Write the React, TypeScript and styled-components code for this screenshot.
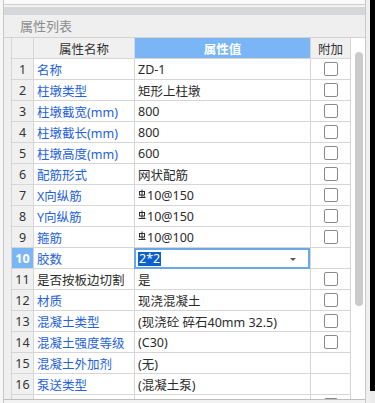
import React from "react";
import styled, { createGlobalStyle } from "styled-components";

const Global = createGlobalStyle`
  html, body { margin: 0; padding: 0; background: #f4f4f4; }
  body { font-family: "Noto Sans", "Noto Sans CJK SC", sans-serif; }
  * { box-sizing: border-box; }
`;

const Page = styled.div`
  display: flex;
  width: 375px;
  height: 403px;
  overflow: hidden;
  background: #f4f4f4;
`;

const LeftGap = styled.div`
  flex: 0 0 3px;
  background: #f6f6f6;
`;

const Panel = styled.div`
  flex: 0 0 363px;
  display: flex;
  flex-direction: column;
  border-left: 1px solid #c9c9c9;
  border-right: 1px solid #c9c9c9;
  background: #efefef;
`;

const TopStrip = styled.div`
  height: 5px;
  background: #fafafa;
  border-bottom: 1px solid #cfcfcf;
`;

const Spacer = styled.div`
  height: 2px;
  background: #f3f3f3;
`;

const Band = styled.div`
  height: 8px;
  background: #d6d7db;
`;

const TitleBar = styled.div`
  height: 23px;
  display: flex;
  align-items: center;
  padding-left: 16px;
  padding-bottom: 1px;
  background: #efefef;
  border-bottom: 1px solid #d2d2d2;
  color: #8c8c8c;
  font-family: "Noto Sans CJK SC", sans-serif;
  font-size: 13px;
`;

const Body = styled.div`
  height: 362px;
  display: flex;
  padding-left: 7px;
  background: #efefef;
  border-bottom: 1px solid #bdbdbd;
  overflow: hidden;
`;

const Table = styled.div`
  flex: 0 0 340px;
  border-left: 1px solid #d4d4d4;
  background: #fff;
  display: flex;
  flex-direction: column;
`;

const Row = styled.div`
  display: grid;
  grid-template-columns: 22px 101px 176px 40px;
  height: 21px;
  flex: 0 0 21px;
`;

const Cell = styled.div<{ $bg?: string; $align?: string; $color?: string; $bold?: boolean }>`
  position: relative;
  display: flex;
  align-items: center;
  justify-content: ${(p) => p.$align || "flex-start"};
  padding-left: ${(p) => (p.$align === "center" ? "0" : "3px")};
  background: ${(p) => p.$bg || "#fff"};
  color: ${(p) => p.$color || "#2b2b2b"};
  font-weight: ${(p) => (p.$bold ? 700 : 400)};
  font-size: 12.5px;
  border-right: 1px solid #d6d6d6;
  border-bottom: 1px solid #d6d6d6;
  white-space: nowrap;
  overflow: visible;
`;

const HeadCell = styled(Cell)`
  justify-content: center;
  padding-left: 0;
  font-family: "Noto Sans CJK SC", sans-serif;
  font-size: 12.5px;
`;

const Check = styled.span`
  width: 14px;
  height: 14px;
  border: 1px solid #8a8a8a;
  border-radius: 2px;
  background: #fff;
  margin-left: 1px;
`;

const Editor = styled.div`
  position: absolute;
  left: -1px;
  top: 0;
  right: 0;
  bottom: -1px;
  border: 2px solid #69a7e6;
  background: #fff;
  display: flex;
  align-items: center;
  padding-left: 2px;
  z-index: 2;
`;

const Selected = styled.span`
  background: #0d5fcc;
  color: #fff;
  padding: 0 1px;
  line-height: 14px;
`;

const Caret = styled.span`
  position: absolute;
  right: 12px;
  top: 8px;
  width: 0;
  height: 0;
  border-left: 3px solid transparent;
  border-right: 3px solid transparent;
  border-top: 3px solid #555;
`;

const Track = styled.div`
  flex: 0 0 14px;
  background: #fff;
  padding-top: 14px;
  display: flex;
  justify-content: center;
`;

const Thumb = styled.div`
  width: 8px;
  height: 254px;
  border-radius: 4px;
  background: #cbcbcb;
  margin-left: 2px;
`;

const BottomStrip = styled.div`
  flex: 1;
  background: #f2f2f2;
`;

const RightGutter = styled.div`
  flex: 0 0 4px;
  background: #efefef;
`;

const BlackEdge = styled.div`
  flex: 0 0 5px;
  display: flex;
  flex-direction: column;
`;

const BlackPart = styled.div`
  height: 391px;
  background: #000;
`;

const GreyPart = styled.div`
  flex: 1;
  background: #ececec;
`;

const Rebar = () => (
  <svg width="8" height="10" viewBox="0 0 8 10" style={{ marginRight: 1, marginTop: -3 }}>
    <g stroke="#2b2b2b" strokeWidth="1" fill="none">
      <path d="M4 0.5V8.5" />
      <rect x="1.5" y="2.5" width="5" height="3.5" />
      <path d="M0.5 8.5H7.5" />
      <path d="M5.5 7L6.8 8" />
    </g>
  </svg>
);

type R = { name: string; value: React.ReactNode; cb: boolean; black?: boolean; partial?: boolean };

const rows: R[] = [
  { name: "名称", value: "ZD-1", cb: true },
  { name: "柱墩类型", value: "矩形上柱墩", cb: true },
  { name: "柱墩截宽(mm)", value: "800", cb: true },
  { name: "柱墩截长(mm)", value: "800", cb: true },
  { name: "柱墩高度(mm)", value: "600", cb: true },
  { name: "配筋形式", value: "网状配筋", cb: true },
  { name: "X向纵筋", value: <><Rebar />10@150</>, cb: true },
  { name: "Y向纵筋", value: <><Rebar />10@150</>, cb: true },
  { name: "箍筋", value: <><Rebar />10@100</>, cb: true },
  { name: "胶数", value: "2*2", cb: false },
  { name: "是否按板边切割", value: "是", cb: true, black: true },
  { name: "材质", value: "现浇混凝土", cb: true },
  { name: "混凝土类型", value: "(现浇砼 碎石40mm 32.5)", cb: true },
  { name: "混凝土强度等级", value: "(C30)", cb: true },
  { name: "混凝土外加剂", value: "(无)", cb: false },
  { name: "泵送类型", value: "(混凝土泵)", cb: false },
  { name: "", value: "", cb: true, partial: true },
];

export default function App() {
  return (
    <>
      <Global />
      <Page>
        <LeftGap />
        <Panel>
          <TopStrip />
          <Spacer />
          <Band />
          <TitleBar>属性列表</TitleBar>
          <Body>
            <Table>
              <Row>
                <HeadCell $bg="#f0f0f0" />
                <HeadCell $bg="#f0f0f0" $color="#333">属性名称</HeadCell>
                <HeadCell $bg="#7ab6f6" $color="#fff" $bold>属性值</HeadCell>
                <HeadCell $bg="#f0f0f0" $color="#333">附加</HeadCell>
              </Row>
              {rows.map((r, i) => {
                const active = i === 9;
                return (
                  <Row key={i}>
                    <Cell
                      $bg={active ? "#7ab6f6" : "#f0f0f0"}
                      $align="center"
                      $color={active ? "#fff" : "#333"}
                      $bold={active}
                    >
                      {r.partial ? "" : i + 1}
                    </Cell>
                    <Cell $color={r.black ? "#2b2b2b" : "#2461dc"}>{r.name}</Cell>
                    <Cell>
                      {active ? (
                        <Editor>
                          <Selected>{r.value}</Selected>
                          <Caret />
                        </Editor>
                      ) : (
                        r.value
                      )}
                    </Cell>
                    <Cell $align="center">{r.cb && <Check />}</Cell>
                  </Row>
                );
              })}
            </Table>
            <Track>
              <Thumb />
            </Track>
          </Body>
          <BottomStrip />
        </Panel>
        <RightGutter />
        <BlackEdge>
          <BlackPart />
          <GreyPart />
        </BlackEdge>
      </Page>
    </>
  );
}
